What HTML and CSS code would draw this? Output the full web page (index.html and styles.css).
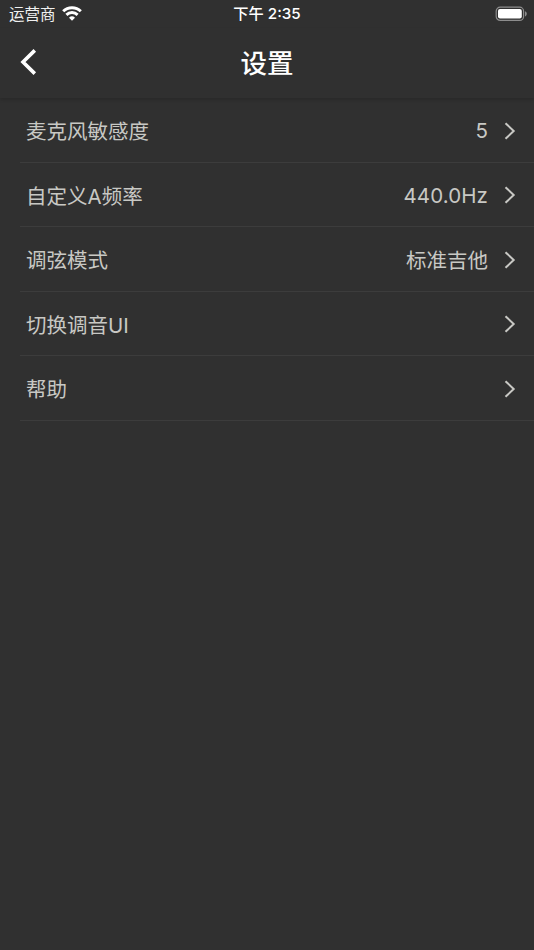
FILE: index.html
```html
<!DOCTYPE html>
<html lang="zh-CN">

<head>
    <meta charset="UTF-8">
    <meta name="viewport" content="width=device-width, initial-scale=1.0">
    <title>设置</title>
    <link rel="stylesheet" href="styles.css">
</head>

<body>
    <div class="status-bar">
        <div class="carrier">
            <span>运营商</span>
            <svg class="wifi" width="20" height="15" viewBox="0 0 20 15">
                <path d="M1.2 5.3a12.6 12.6 0 0 1 17.6 0" />
                <path d="M4.4 8.8a8.2 8.2 0 0 1 11.2 0" />
                <path class="dot" d="M10 14.8L7 11.7a4.3 4.3 0 0 1 6 0z" />
            </svg>
        </div>
        <div class="time">下午 <b>2:35</b></div>
        <div class="power">
            <svg width="32" height="16" viewBox="0 0 32 16">
                <rect class="shell" x="1.2" y="1.2" width="27.4" height="13.2" rx="4" />
                <rect class="level" x="3" y="3" width="23.8" height="9.6" rx="2" />
                <path class="tip" d="M30 5.2c2.4 .7 2.4 4.5 0 5.2z" />
            </svg>
        </div>
    </div>

    <header class="nav-bar">
        <svg class="back" width="20" height="28" viewBox="0 0 20 28">
            <path d="M15.8 2.4L4 14l11.8 11.6" />
        </svg>
        <h1>设置</h1>
    </header>

    <ul class="settings">
        <li class="row">
            <span class="label">麦克风敏感度</span>
            <span class="value number">5</span>
            <svg class="arrow" width="12" height="18" viewBox="0 0 12 18"><path d="M1.5 1.2L9.7 9l-8.2 7.8" /></svg>
        </li>
        <li class="row">
            <span class="label">自定义A频率</span>
            <span class="value number">440.0Hz</span>
            <svg class="arrow" width="12" height="18" viewBox="0 0 12 18"><path d="M1.5 1.2L9.7 9l-8.2 7.8" /></svg>
        </li>
        <li class="row">
            <span class="label">调弦模式</span>
            <span class="value">标准吉他</span>
            <svg class="arrow" width="12" height="18" viewBox="0 0 12 18"><path d="M1.5 1.2L9.7 9l-8.2 7.8" /></svg>
        </li>
        <li class="row">
            <span class="label">切换调音UI</span>
            <svg class="arrow" width="12" height="18" viewBox="0 0 12 18"><path d="M1.5 1.2L9.7 9l-8.2 7.8" /></svg>
        </li>
        <li class="row">
            <span class="label">帮助</span>
            <svg class="arrow" width="12" height="18" viewBox="0 0 12 18"><path d="M1.5 1.2L9.7 9l-8.2 7.8" /></svg>
        </li>
    </ul>
</body>

</html>
```

FILE: styles.css
```css
* {
    box-sizing: border-box;
}

body {
    margin: 0;
    min-height: 950px;
    background-color: #303030;
    color: #fff;
    font-family: Inter, "Noto Sans CJK SC", sans-serif;
}

svg {
    display: block;
    fill: none;
}

/* status bar */
.status-bar {
    display: grid;
    grid-template-columns: 1fr auto 1fr;
    align-items: center;
    height: 28px;
    padding: 0 7px 0 9px;
    font-size: 15.5px;
    line-height: 28px;
}

.carrier {
    display: flex;
    align-items: center;
    gap: 6px;
    color: #f0f0f0;
}

.carrier span {
    padding-top: 1px;
    line-height: 27px;
}

.wifi {
    margin-top: -2px;
    stroke: #fff;
    stroke-width: 3;
}

.wifi .dot {
    fill: #fff;
    stroke: none;
}

.time {
    margin-right: 2px;
    font-size: 15.2px;
    font-weight: 500;
}

.time b {
    font-weight: 500;
}

.power {
    justify-self: end;
    margin-top: -1px;
}

.shell {
    stroke: #8d8d8d;
    stroke-width: 1.2;
}

.level {
    fill: #fff;
}

.tip {
    fill: #8d8d8d;
}

/* title */
.nav-bar {
    display: grid;
    grid-template-columns: 1fr auto 1fr;
    align-items: center;
    height: 70px;
    padding: 0 19px;
    box-shadow: 0 2px 3px rgba(0, 0, 0, 0.14);
}

.back {
    margin-top: -2px;
    stroke: #fff;
    stroke-width: 3.6;
}

h1 {
    margin: 0;
    font-size: 26.5px;
    font-weight: 500;
    line-height: 40px;
}

/* list */
.settings {
    margin: 0;
    padding: 0 0 0 20px;
    list-style: none;
}

.row {
    display: flex;
    align-items: center;
    height: 64.5px;
    padding: 2px 18px 0 6px;
    border-bottom: 1px solid #3c3c3c;
    color: #c8c8c4;
    font-size: 20.5px;
    line-height: 30px;
}

.label {
    flex: 1;
    padding-top: 3px;
}

.value {
    padding-top: 3px;
    margin-right: 16px;
}

.number {
    padding-top: 1px;
    letter-spacing: 0.1px;
}

.arrow {
    stroke: #c8c8c4;
    stroke-width: 2;
}
```
